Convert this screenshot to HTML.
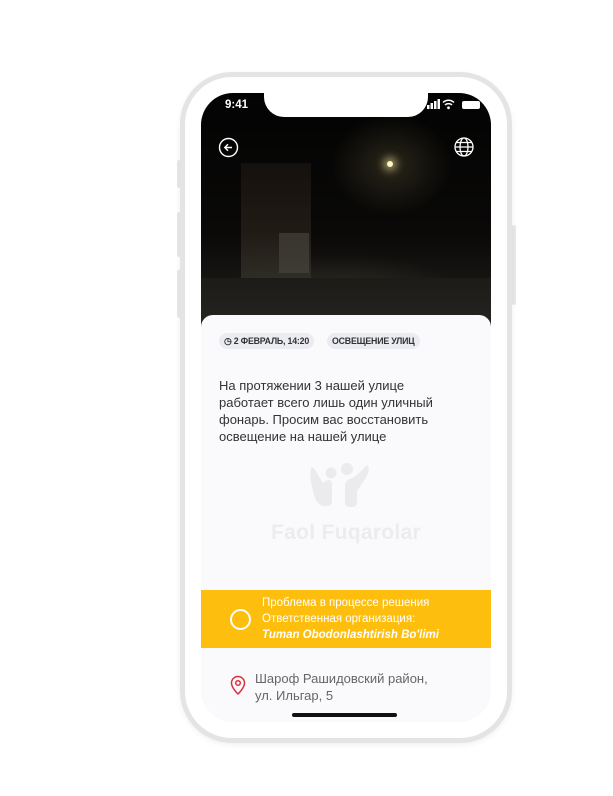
<!DOCTYPE html>
<html><head><meta charset="utf-8"><style>
html,body{margin:0;padding:0;background:#fff;width:613px;height:796px;overflow:hidden;font-family:"Liberation Sans",sans-serif}
.frame{position:absolute;left:180px;top:72px;width:332px;height:671px;border-radius:52px;background:#fff;border:5px solid #e4e4e4;box-sizing:border-box;box-shadow:0 2px 6px rgba(0,0,0,.06)}
.btn{position:absolute;background:#e9e9e9;width:4px;border-radius:2px}
.screen{position:absolute;left:201px;top:93px;width:290px;height:629px;border-radius:32px;overflow:hidden;background:#fafafc}
.photo{position:absolute;left:0;top:0;width:290px;height:235px;background:radial-gradient(ellipse 60px 50px at 190px 72px,rgba(120,110,70,.3),transparent),radial-gradient(ellipse 120px 40px at 140px 200px,rgba(70,65,55,.5),transparent),linear-gradient(#030303,#0a0908 60%,#1a1815 85%,#141311)}
.notch{position:absolute;left:63px;top:0;width:164px;height:24px;background:#fff;border-radius:0 0 20px 20px}
.card{position:absolute;left:0;top:222px;width:290px;height:420px;background:#fafafc;border-radius:12px 12px 0 0}
.chip{position:absolute;top:240px;height:16px;border-radius:8px;background:#ebebf2;font-size:8.8px;font-weight:bold;color:#333;line-height:16px;padding:0 5px;white-space:nowrap;letter-spacing:-.2px}
.txt{position:absolute;left:18px;top:284px;width:222px;font-size:13px;line-height:17px;color:#333}
.yellow{position:absolute;left:0;top:497px;width:290px;height:58px;background:#fdbe0e;color:#fff;font-size:11.5px;line-height:16px}
</style></head><body>
<div class="btn" style="left:177px;top:160px;height:28px"></div>
<div class="btn" style="left:177px;top:212px;height:45px"></div>
<div class="btn" style="left:177px;top:270px;height:48px"></div>
<div class="btn" style="left:512px;top:225px;height:80px"></div>
<div class="frame"></div>
<div class="screen">
 <div class="photo">
  <div style="position:absolute;left:40px;top:70px;width:70px;height:115px;background:linear-gradient(#18130f,#261f18 60%,#34312a);opacity:.8"></div>
  <div style="position:absolute;left:78px;top:140px;width:30px;height:40px;background:#4a4740;opacity:.6"></div>
  <div style="position:absolute;left:186px;top:68px;width:6px;height:6px;border-radius:3px;background:#fff6c0;box-shadow:0 0 8px 4px rgba(255,240,170,.5)"></div>
  <div style="position:absolute;left:0;top:185px;width:290px;height:50px;background:linear-gradient(#1c1b18,#262420)"></div>
 </div>
 <div class="notch"></div>
 <div style="position:absolute;left:24px;top:6px;color:#fff;font-size:11.5px;font-weight:bold">9:41</div>
 <svg style="position:absolute;left:226px;top:5px" width="60" height="12" viewBox="0 0 60 12"><rect x="0" y="7" width="2.5" height="4" fill="#fff"/><rect x="3.5" y="5" width="2.5" height="6" fill="#fff"/><rect x="7" y="3" width="2.5" height="8" fill="#fff"/><rect x="10.5" y="1" width="2.5" height="10" fill="#fff"/><path d="M16 4.5a8 8 0 0 1 11 0M18 7a5 5 0 0 1 7 0" stroke="#fff" stroke-width="1.5" fill="none"/><circle cx="21.5" cy="9.8" r="1.4" fill="#fff"/><rect x="35" y="3" width="18" height="8" rx="2" fill="#fff"/></svg>
 <svg style="position:absolute;left:17px;top:44px" width="21" height="21" viewBox="0 0 21 21"><circle cx="10.5" cy="10.5" r="9" stroke="#fff" stroke-width="1.4" fill="none"/><path d="M14 10.5H7M10 7.3l-3.2 3.2 3.2 3.2" stroke="#fff" stroke-width="1.4" fill="none"/></svg>
 <svg style="position:absolute;left:252px;top:43px" width="22" height="22" viewBox="0 0 22 22" fill="none" stroke="#fff" stroke-width="1.3"><circle cx="11" cy="11" r="9"/><ellipse cx="11" cy="11" rx="4" ry="9"/><path d="M2 11h18M3.5 6.5h15M3.5 15.5h15"/></svg>
 <div class="card"></div>
 <div class="chip" style="left:18px">◷ 2 ФЕВРАЛЬ, 14:20</div>
 <div class="chip" style="left:126px">ОСВЕЩЕНИЕ УЛИЦ</div>
 <div class="txt">На протяжении 3 нашей улице работает всего лишь один уличный фонарь. Просим вас восстановить освещение на нашей улице</div>
 <svg style="position:absolute;left:108px;top:370px" width="62" height="44" viewBox="0 0 62 44" fill="#ebebee"><circle cx="22" cy="10" r="5.5"/><path d="M2 4c3 0 5 4 7 8l5 8c2-2 4-3 6-3 2 0 3 2 3 4v17c0 3-2 5-5 5h-3c-5 0-9-6-10-12C3 24 0 14 2 4z"/><circle cx="38" cy="6" r="6"/><path d="M58 2c3 2 2 8-2 14L48 28v12c0 2-2 4-5 4h-3c-3 0-4-2-4-4V22c0-3 2-5 5-6 6-2 11-8 17-14z"/></svg>
 <div style="position:absolute;left:0;width:290px;top:428px;text-align:center;font-size:21px;font-weight:bold;color:#ececef;letter-spacing:.3px">Faol Fuqarolar</div>
 <div class="yellow">
  <div style="position:absolute;left:29px;top:19px;width:17px;height:17px;border:2px solid #fff;border-radius:50%"></div>
  <div style="position:absolute;left:61px;top:5px;white-space:nowrap">Проблема в процессе решения<br>Ответственная организация:<br><b><i>Tuman Obodonlashtirish Bo'limi</i></b></div>
 </div>
 <svg style="position:absolute;left:29px;top:582px" width="16" height="20" viewBox="0 0 16 20" fill="none" stroke="#d9303e" stroke-width="1.5"><path d="M8 19s6.5-6 6.5-11A6.5 6.5 0 0 0 1.5 8C1.5 13 8 19 8 19z"/><circle cx="8" cy="8" r="2.3"/></svg>
 <div style="position:absolute;left:54px;top:577px;font-size:13px;line-height:17px;color:#666">Шароф Рашидовский район,<br>ул. Ильгар, 5</div>
 <div style="position:absolute;left:91px;top:620px;width:105px;height:4px;border-radius:2px;background:#111"></div>
</div>
</body></html>
